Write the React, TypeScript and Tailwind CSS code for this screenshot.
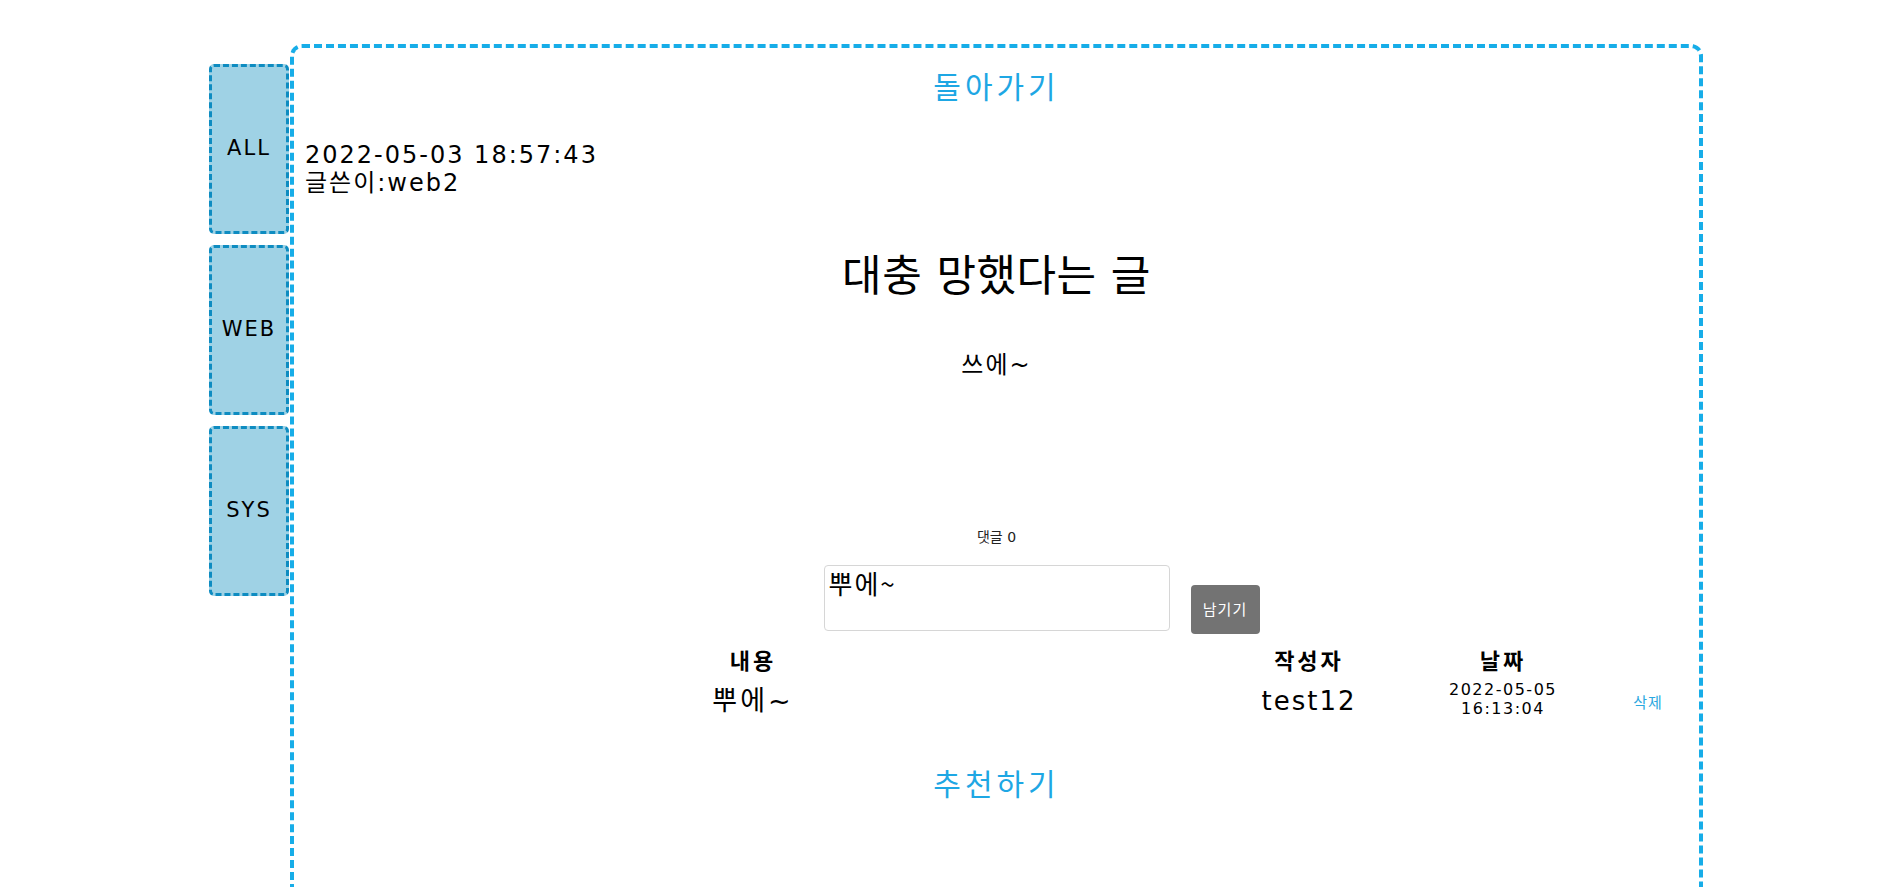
import React from "react";

const font = { fontFamily: '"DejaVu Sans", "Noto Sans CJK KR", sans-serif' };

function SideBox({ label }: { label: string }) {
  return (
    <div className="w-[80px] h-[170px] flex items-center justify-center rounded-[5px] border-[3px] border-dashed border-[#0e8cc1] bg-[#9fd2e5] text-[21px] tracking-[2px] text-black">
      {label}
    </div>
  );
}

export default function App() {
  return (
    <div className="min-h-[887px] bg-white text-black" style={font}>
      <div className="flex pl-[209px] pt-[44px]">
        <nav className="mt-[20px] flex w-[80px] shrink-0 flex-col gap-[11px]">
          <SideBox label="ALL" />
          <SideBox label="WEB" />
          <SideBox label="SYS" />
        </nav>
        <main className="ml-[1px] flex h-[900px] w-[1413px] shrink-0 flex-col rounded-[12px] border-4 border-dashed border-[#17ade8]">
          <div className="pt-[20px] text-center text-[30px] leading-[40px] tracking-[4px] text-[#1ea7e4]">돌아가기</div>

          <div className="mt-[33px] pl-[11px] text-[24px] leading-[28px] tracking-[2px]">
            <div>2022-05-03 18:57:43</div>
            <div>글쓴이:web2</div>
          </div>

          <h1 className="mt-[54px] text-center text-[43px] leading-[50px] tracking-[0.5px]">대충 망했다는 글</h1>

          <p className="mt-[49px] text-center text-[24px] leading-[30px] tracking-[2px]">쓰에~</p>

          <div className="mt-[147px] text-center text-[14px] leading-[20px] text-[#222]">댓글 0</div>

          <div className="mt-[18px] grid grid-cols-[1fr_346px_1fr]">
            <div />
            <textarea
              readOnly
              defaultValue="뿌에~"
              className="h-[66px] w-[346px] resize-none rounded-[4px] border border-[#d6d6d6] px-[4px] py-[2px] text-[26px] leading-[30px] tracking-[2px] text-black outline-none"
              style={{ fontFamily: '"Noto Sans CJK KR", sans-serif' }}
            />
            <div className="flex items-end">
              <button
                className="mb-[-3px] ml-[21px] h-[49px] w-[69px] rounded-[4px] bg-[#737373] text-[15px] tracking-[1px] text-white"
                style={{ fontFamily: '"Noto Sans CJK KR", sans-serif' }}
              >
                남기기
              </button>
            </div>
          </div>

          <div className="mt-[18px] flex">
            <div className="ml-[379px] flex w-[160px] flex-col items-center">
              <div className="text-[22px] font-bold leading-[26px] tracking-[3px]">내용</div>
              <div className="mt-[13px] text-[27px] leading-[26px] tracking-[3px]">뿌에~</div>
            </div>
            <div className="ml-[406px] flex w-[140px] flex-col items-center">
              <div className="text-[22px] font-bold leading-[26px] tracking-[3px]">작성자</div>
              <div className="mt-[13px] text-[26px] leading-[26px] tracking-[2px]">test12</div>
            </div>
            <div className="ml-[54px] flex w-[140px] flex-col items-center">
              <div className="text-[22px] font-bold leading-[26px] tracking-[3px]">날짜</div>
              <div className="mt-[5px] text-center text-[16px] leading-[19px] tracking-[1.5px]">
                2022-05-05
                <br />
                16:13:04
              </div>
            </div>
            <div className="ml-[45px] flex w-[60px] flex-col items-center">
              <div className="h-[26px]" />
              <div className="mt-[18px] text-[15px] leading-[20px] tracking-[1px] text-[#2aa8e0]">삭제</div>
            </div>
          </div>

          <div className="mt-[47px] text-center text-[30px] leading-[40px] tracking-[4px] text-[#1ea7e4]">추천하기</div>
        </main>
      </div>
    </div>
  );
}
